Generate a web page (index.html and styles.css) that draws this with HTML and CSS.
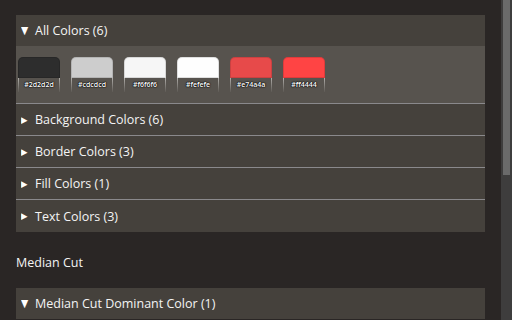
FILE: index.html
```html
<!DOCTYPE html>
<html>
<head>
<meta charset="utf-8">
<link rel="stylesheet" href="styles.css">
</head>
<body>
<div class="content">
  <div class="panel">
    <div class="header"><span class="tri">&#9660;</span><span>All Colors (6)</span></div>
    <div class="swatches">
      <div class="swatch"><div class="chip" style="background:#2d2d2d"></div><div class="label">#2d2d2d</div></div>
      <div class="swatch"><div class="chip" style="background:#cdcdcd"></div><div class="label">#cdcdcd</div></div>
      <div class="swatch"><div class="chip" style="background:#f6f6f6"></div><div class="label">#f6f6f6</div></div>
      <div class="swatch"><div class="chip" style="background:#fefefe"></div><div class="label">#fefefe</div></div>
      <div class="swatch"><div class="chip" style="background:#e74a4a"></div><div class="label">#e74a4a</div></div>
      <div class="swatch"><div class="chip" style="background:#ff4444"></div><div class="label">#ff4444</div></div>
    </div>
    <div class="row"><span class="tri small">&#9654;</span><span>Background Colors (6)</span></div>
    <div class="row"><span class="tri small">&#9654;</span><span>Border Colors (3)</span></div>
    <div class="row"><span class="tri small">&#9654;</span><span>Fill Colors (1)</span></div>
    <div class="row last"><span class="tri small">&#9654;</span><span>Text Colors (3)</span></div>
  </div>
  <div class="title">Median Cut</div>
  <div class="panel">
    <div class="header"><span class="tri">&#9660;</span><span>Median Cut Dominant Color (1)</span></div>
  </div>
</div>
<div class="scrollbar"><div class="thumb"></div></div>
</body>
</html>
```
FILE: styles.css
```css
html, body {
  margin: 0;
  height: 100%;
  overflow: hidden;
}
body {
  background: #2a2625;
  display: flex;
  font-family: "Open Sans", "Noto Sans", sans-serif;
  font-size: 12.5px;
  color: #f4f4f4;
}
.content {
  flex: 1;
  padding: 15px 16px 0 16px;
}
.panel {
  background: #45413c;
}
.header, .row {
  display: flex;
  align-items: center;
  height: 31px;
  padding-left: 5px;
}
.row {
  border-top: 1px solid #8a898c;
}
.row.last {
  height: 32px;
}
.tri {
  width: 14px;
  font-size: 11px;
  color: #ffffff;
  font-family: "DejaVu Sans", sans-serif;
  transform: scaleX(0.85);
  transform-origin: left center;
}
.tri.small {
  font-size: 10.5px;
  transform: scale(0.8, 0.85);
}
.swatches {
  background: #57534e;
  height: 57px;
  box-sizing: border-box;
  padding: 11px 0 0 2px;
  display: flex;
  gap: 11px;
}
.swatch {
  width: 42px;
}
.chip {
  height: 21px;
  border-radius: 5px 5px 0 0;
  box-shadow: inset 0 0 0 1px rgba(0,0,0,0.12);
}
.label {
  height: 14px;
  font-size: 7px;
  font-weight: 600;
  line-height: 14px;
  text-align: center;
  color: #ffffff;
  text-shadow: 0 0 2px #000, 0 0 1px #000, 0 0 1px #000;
  border-left: 1px solid #9a9895;
  border-right: 1px solid #9a9895;
  border-image: linear-gradient(#b5b3af, rgba(87,83,78,0)) 1;
}
.title {
  height: 56px;
  box-sizing: border-box;
  padding-top: 23px;
  line-height: 16px;
  font-size: 12.5px;
}
.scrollbar {
  width: 11px;
  background: #3e3d3d;
  display: flex;
  justify-content: center;
}
.thumb {
  width: 7px;
  height: 175px;
  background: #6a6a6a;
}
```
